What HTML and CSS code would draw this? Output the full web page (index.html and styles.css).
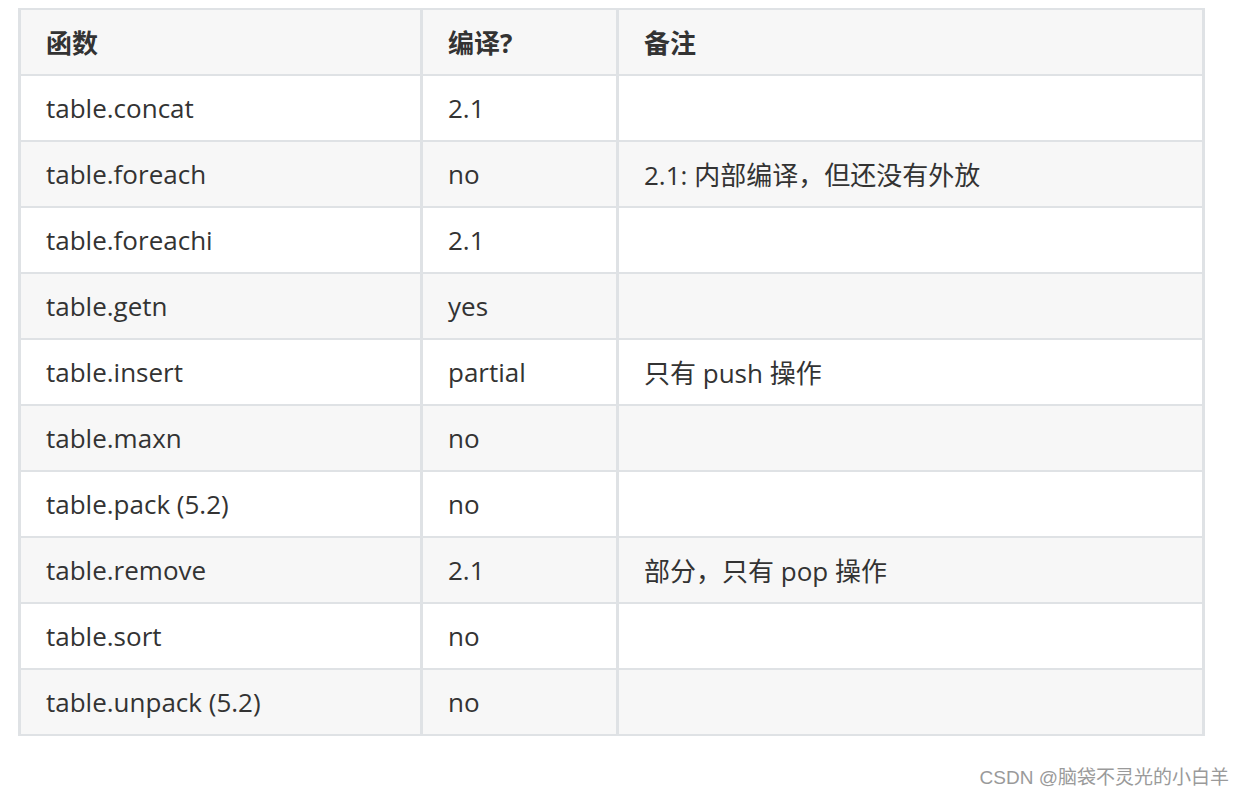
FILE: index.html
```html
<!DOCTYPE html>
<html>
<head>
<meta charset="utf-8">
<link rel="stylesheet" href="styles.css">
</head>
<body>
<table class="tbl">
  <colgroup>
    <col class="c1"><col class="c2"><col class="c3">
  </colgroup>
  <thead>
    <tr><th>函数</th><th>编译?</th><th>备注</th></tr>
  </thead>
  <tbody>
    <tr><td>table.concat</td><td>2.1</td><td></td></tr>
    <tr><td>table.foreach</td><td>no</td><td>2.1: 内部编译，但还没有外放</td></tr>
    <tr><td>table.foreachi</td><td>2.1</td><td></td></tr>
    <tr><td>table.getn</td><td>yes</td><td></td></tr>
    <tr><td>table.insert</td><td>partial</td><td>只有 push 操作</td></tr>
    <tr><td>table.maxn</td><td>no</td><td></td></tr>
    <tr><td>table.pack (5.2)</td><td>no</td><td></td></tr>
    <tr><td>table.remove</td><td>2.1</td><td>部分，只有 pop 操作</td></tr>
    <tr><td>table.sort</td><td>no</td><td></td></tr>
    <tr><td>table.unpack (5.2)</td><td>no</td><td></td></tr>
  </tbody>
</table>
<div class="watermark">CSDN @脑袋不灵光的小白羊</div>
</body>
</html>
```
FILE: styles.css
```css
html, body {
  margin: 0;
  padding: 0;
  background: #ffffff;
}
body {
  font-family: "Open Sans", "Noto Sans CJK SC", sans-serif;
  color: #333333;
}
.tbl {
  border-collapse: collapse;
  table-layout: fixed;
  margin: 8px 0 0 18px;
  width: 1187px;
}
.c1 { width: 402px; }
.c2 { width: 196px; }
.c3 { width: 586px; }
.tbl th, .tbl td {
  border-left: 3px solid #dfe2e5;
  border-right: 3px solid #dfe2e5;
  border-top: 2px solid #dfe2e5;
  border-bottom: 2px solid #dfe2e5;
  height: 66px;
  padding: 0 25px;
  box-sizing: border-box;
  font-size: 26px;
  text-align: left;
  vertical-align: middle;
  white-space: nowrap;
}
.tbl th {
  font-weight: 700;
  background: #f7f7f7;
}
.tbl tbody tr:nth-child(even) td {
  background: #f7f7f7;
}
.tbl tbody tr:nth-child(odd) td {
  background: #ffffff;
}
.watermark {
  margin: 26px 16px 0 0;
  text-align: right;
  font-family: "Liberation Sans", "Noto Sans CJK SC", sans-serif;
  font-size: 19px;
  color: #9a9a9a;
}
```
